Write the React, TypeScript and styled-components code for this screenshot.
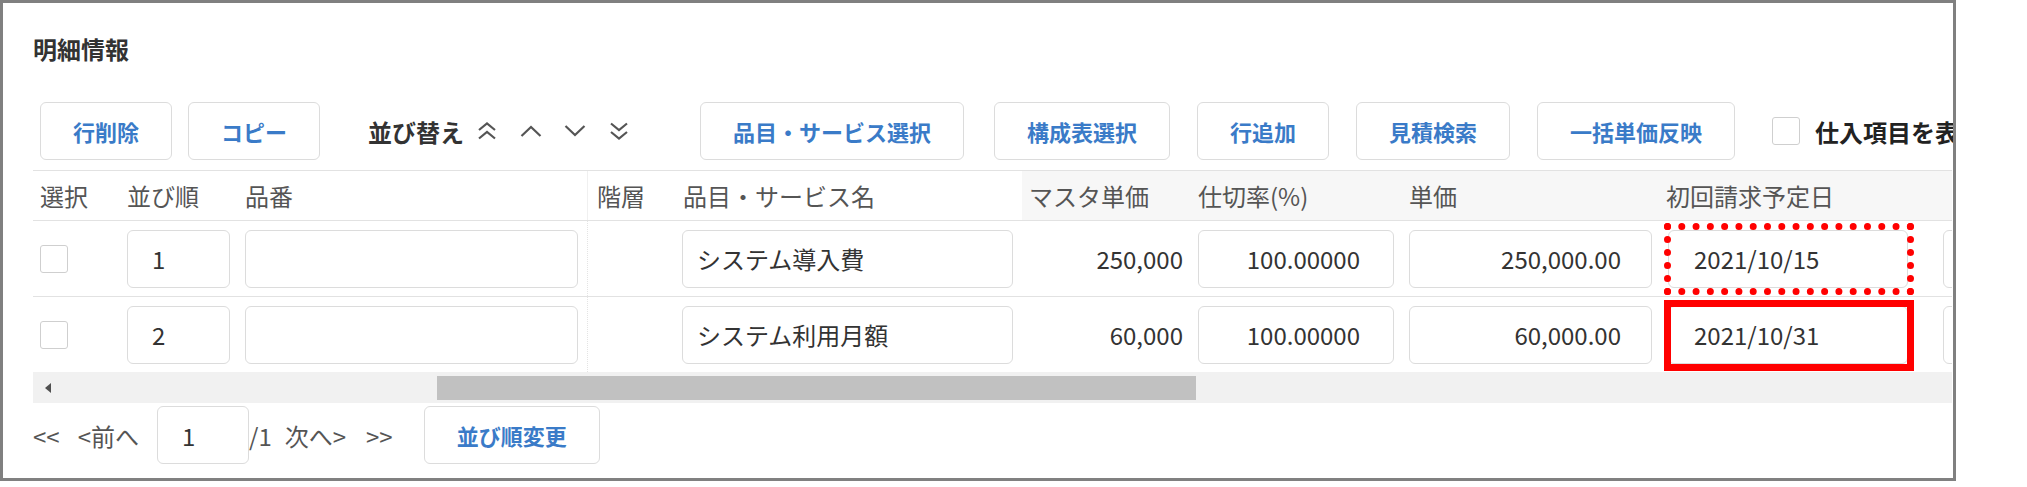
import styled, { createGlobalStyle } from 'styled-components';

const FONT = '"Noto Sans CJK JP", "Noto Sans", sans-serif';

const GlobalStyle = createGlobalStyle`
  html, body {
    margin: 0;
    padding: 0;
    background: #fff;
  }
  body {
    font-family: ${FONT};
    color: #333;
  }
`;

const Frame = styled.div`
  box-sizing: border-box;
  width: 1956px;
  height: 481px;
  border: 3px solid #808080;
  padding-left: 30px;
  overflow: hidden;
  background: #fff;
`;

const Title = styled.h2`
  margin: 31px 0 0;
  font-size: 24px;
  line-height: 30px;
  font-weight: 700;
  color: #333;
`;

const Toolbar = styled.div`
  display: flex;
  align-items: center;
  height: 58px;
  margin: 38px 0 10px;
  padding-left: 7px;
  white-space: nowrap;
`;

const Button = styled.button<{ $gap?: number }>`
  flex-shrink: 0;
  height: 58px;
  padding: 0 32px;
  margin-right: ${(p) => p.$gap ?? 27}px;
  border: 1px solid #dcdcdc;
  border-radius: 6px;
  background: #fff;
  color: #3a7bc8;
  font: 700 22px/1 ${FONT};
  white-space: nowrap;
`;

const SortLabel = styled.span`
  font-size: 24px;
  font-weight: 700;
  color: #333;
  margin-right: 12px;
`;

const SortIcons = styled.div`
  display: flex;
  align-items: center;
  gap: 22px;
  margin-right: 70px;
  color: #555;
`;

const Check = styled.span<{ $gap?: number }>`
  flex-shrink: 0;
  display: inline-block;
  box-sizing: border-box;
  width: 28px;
  height: 28px;
  border: 1px solid #cfcfcf;
  border-radius: 3px;
  background: #fff;
  margin-right: ${(p) => p.$gap ?? 0}px;
`;

const CheckText = styled.span`
  font-size: 24px;
  font-weight: 700;
  color: #222;
`;

const COLS = '87px 117px 350px 85px 350px 168px 212px 256px 278px 220px';

const Table = styled.div`
  width: 1919px;
  overflow: hidden;
  border-top: 1px solid #e2e2e2;
`;

const Row = styled.div<{ $head?: boolean; $last?: boolean }>`
  display: grid;
  grid-template-columns: ${COLS};
  height: ${(p) => (p.$head ? 49 : 75)}px;
  border-bottom: ${(p) => (p.$last ? 'none' : '1px solid #e2e2e2')};
`;

const HeadCell = styled.div<{ $pad?: number; $shade?: boolean; $split?: boolean }>`
  display: flex;
  align-items: center;
  padding-left: ${(p) => p.$pad ?? 7}px;
  background: ${(p) => (p.$shade ? '#f7f7f7' : '#fff')};
  border-left: ${(p) => (p.$split ? '1px solid #f0f0f0' : 'none')};
  font-size: 24px;
  color: #555;
  white-space: nowrap;
  overflow: hidden;
`;

const Cell = styled.div<{ $pad?: number; $right?: boolean; $split?: boolean }>`
  position: relative;
  display: flex;
  align-items: center;
  justify-content: ${(p) => (p.$right ? 'flex-end' : 'flex-start')};
  padding: 0 ${(p) => (p.$right ? 7 : 0)}px 0 ${(p) => p.$pad ?? 7}px;
  border-left: ${(p) => (p.$split ? '1px dotted #e4e4e4' : 'none')};
  font-size: 24px;
  color: #333;
  white-space: nowrap;
  overflow: hidden;
`;

const Field = styled.input<{ $w: number; $right?: boolean; $inset?: number }>`
  flex-shrink: 0;
  box-sizing: border-box;
  width: ${(p) => p.$w}px;
  height: 58px;
  padding: ${(p) => (p.$right ? `0 ${p.$inset ?? 30}px 0 0` : `0 0 0 ${p.$inset ?? 24}px`)};
  border: 1px solid #dcdcdc;
  border-radius: 6px;
  background: #fff;
  color: #333;
  font: 400 24px/1 ${FONT};
  text-align: ${(p) => (p.$right ? 'right' : 'left')};
  outline: none;
`;

const Mark = styled.div<{ $kind: 'dotted' | 'solid' }>`
  position: absolute;
  left: 6px;
  top: ${(p) => (p.$kind === 'dotted' ? 2 : 3)}px;
  box-sizing: border-box;
  width: 250px;
  height: ${(p) => (p.$kind === 'dotted' ? 72 : 71)}px;
  border: ${(p) => (p.$kind === 'dotted' ? '7px dotted #ff0000' : '7px solid #ff0000')};
  pointer-events: none;
`;

const ScrollTrack = styled.div`
  display: flex;
  align-items: center;
  width: 1919px;
  height: 31px;
  background: #f1f1f1;
`;

const ScrollArrow = styled.span`
  width: 0;
  height: 0;
  margin-left: 12px;
  border-top: 5px solid transparent;
  border-bottom: 5px solid transparent;
  border-right: 6px solid #505050;
`;

const Thumb = styled.div<{ $offset: number; $w: number }>`
  height: 24px;
  margin-left: ${(p) => p.$offset}px;
  width: ${(p) => p.$w}px;
  background: #c1c1c1;
`;

const Pager = styled.div`
  display: flex;
  align-items: center;
  height: 58px;
  margin-top: 3px;
  font-size: 24px;
  color: #555;
  white-space: nowrap;
`;

const PagerText = styled.span<{ $gap?: number }>`
  margin-right: ${(p) => p.$gap ?? 0}px;
`;

type Item = {
  no: string;
  name: string;
  master: string;
  rate: string;
  price: string;
  date: string;
  mark: 'dotted' | 'solid';
};

const items: Item[] = [
  { no: '1', name: 'システム導入費', master: '250,000', rate: '100.00000', price: '250,000.00', date: '2021/10/15', mark: 'dotted' },
  { no: '2', name: 'システム利用月額', master: '60,000', rate: '100.00000', price: '60,000.00', date: '2021/10/31', mark: 'solid' },
];

function Chevron({ dir, double }: { dir: 'up' | 'down'; double?: boolean }) {
  const flip = dir === 'down' ? 'scale(1,-1) translate(0,-22)' : undefined;
  return (
    <svg width="22" height="22" viewBox="0 0 22 22" fill="none" stroke="currentColor" strokeWidth="2.2">
      <g transform={flip}>
        {double ? (
          <>
            <polyline points="3,10 11,3.5 19,10" />
            <polyline points="3,18.5 11,12 19,18.5" />
          </>
        ) : (
          <polyline points="1.5,16 11,7 20.5,16" />
        )}
      </g>
    </svg>
  );
}

export default function App() {
  return (
    <>
      <GlobalStyle />
      <Frame>
        <Title>明細情報</Title>

        <Toolbar>
          <Button $gap={16}>行削除</Button>
          <Button $gap={48}>コピー</Button>
          <SortLabel>並び替え</SortLabel>
          <SortIcons>
            <Chevron dir="up" double />
            <Chevron dir="up" />
            <Chevron dir="down" />
            <Chevron dir="down" double />
          </SortIcons>
          <Button $gap={30}>品目・サービス選択</Button>
          <Button>構成表選択</Button>
          <Button>行追加</Button>
          <Button>見積検索</Button>
          <Button $gap={37}>一括単価反映</Button>
          <Check $gap={15} />
          <CheckText>仕入項目を表示</CheckText>
        </Toolbar>

        <Table>
          <Row $head>
            <HeadCell>選択</HeadCell>
            <HeadCell>並び順</HeadCell>
            <HeadCell $pad={8}>品番</HeadCell>
            <HeadCell $pad={9} $split>階層</HeadCell>
            <HeadCell $pad={11}>品目・サービス名</HeadCell>
            <HeadCell $shade>マスタ単価</HeadCell>
            <HeadCell $shade $pad={8}>仕切率(%)</HeadCell>
            <HeadCell $shade>単価</HeadCell>
            <HeadCell $shade $pad={8}>初回請求予定日</HeadCell>
            <HeadCell $shade />
          </Row>

          {items.map((item, i) => (
            <Row key={item.no} $last={i === items.length - 1}>
              <Cell>
                <Check />
              </Cell>
              <Cell>
                <Field $w={103} readOnly value={item.no} />
              </Cell>
              <Cell $pad={8}>
                <Field $w={333} readOnly value="" />
              </Cell>
              <Cell $split />
              <Cell $pad={10}>
                <Field $w={331} $inset={14} readOnly value={item.name} />
              </Cell>
              <Cell $right>{item.master}</Cell>
              <Cell $pad={8}>
                <Field $w={196} $right $inset={33} readOnly value={item.rate} />
              </Cell>
              <Cell>
                <Field $w={243} $right readOnly value={item.price} />
              </Cell>
              <Cell $pad={10}>
                <Field $w={240} $inset={25} readOnly value={item.date} />
                <Mark $kind={item.mark} />
              </Cell>
              <Cell>
                <Field $w={200} readOnly value="" />
              </Cell>
            </Row>
          ))}
        </Table>

        <ScrollTrack>
          <ScrollArrow />
          <Thumb $offset={386} $w={759} />
        </ScrollTrack>

        <Pager>
          <PagerText $gap={18}>&lt;&lt;</PagerText>
          <PagerText $gap={18}>&lt;前へ</PagerText>
          <Field $w={92} readOnly value="1" />
          <PagerText $gap={13}>/1</PagerText>
          <PagerText $gap={20}>次へ&gt;</PagerText>
          <PagerText $gap={31}>&gt;&gt;</PagerText>
          <Button>並び順変更</Button>
        </Pager>
      </Frame>
    </>
  );
}
